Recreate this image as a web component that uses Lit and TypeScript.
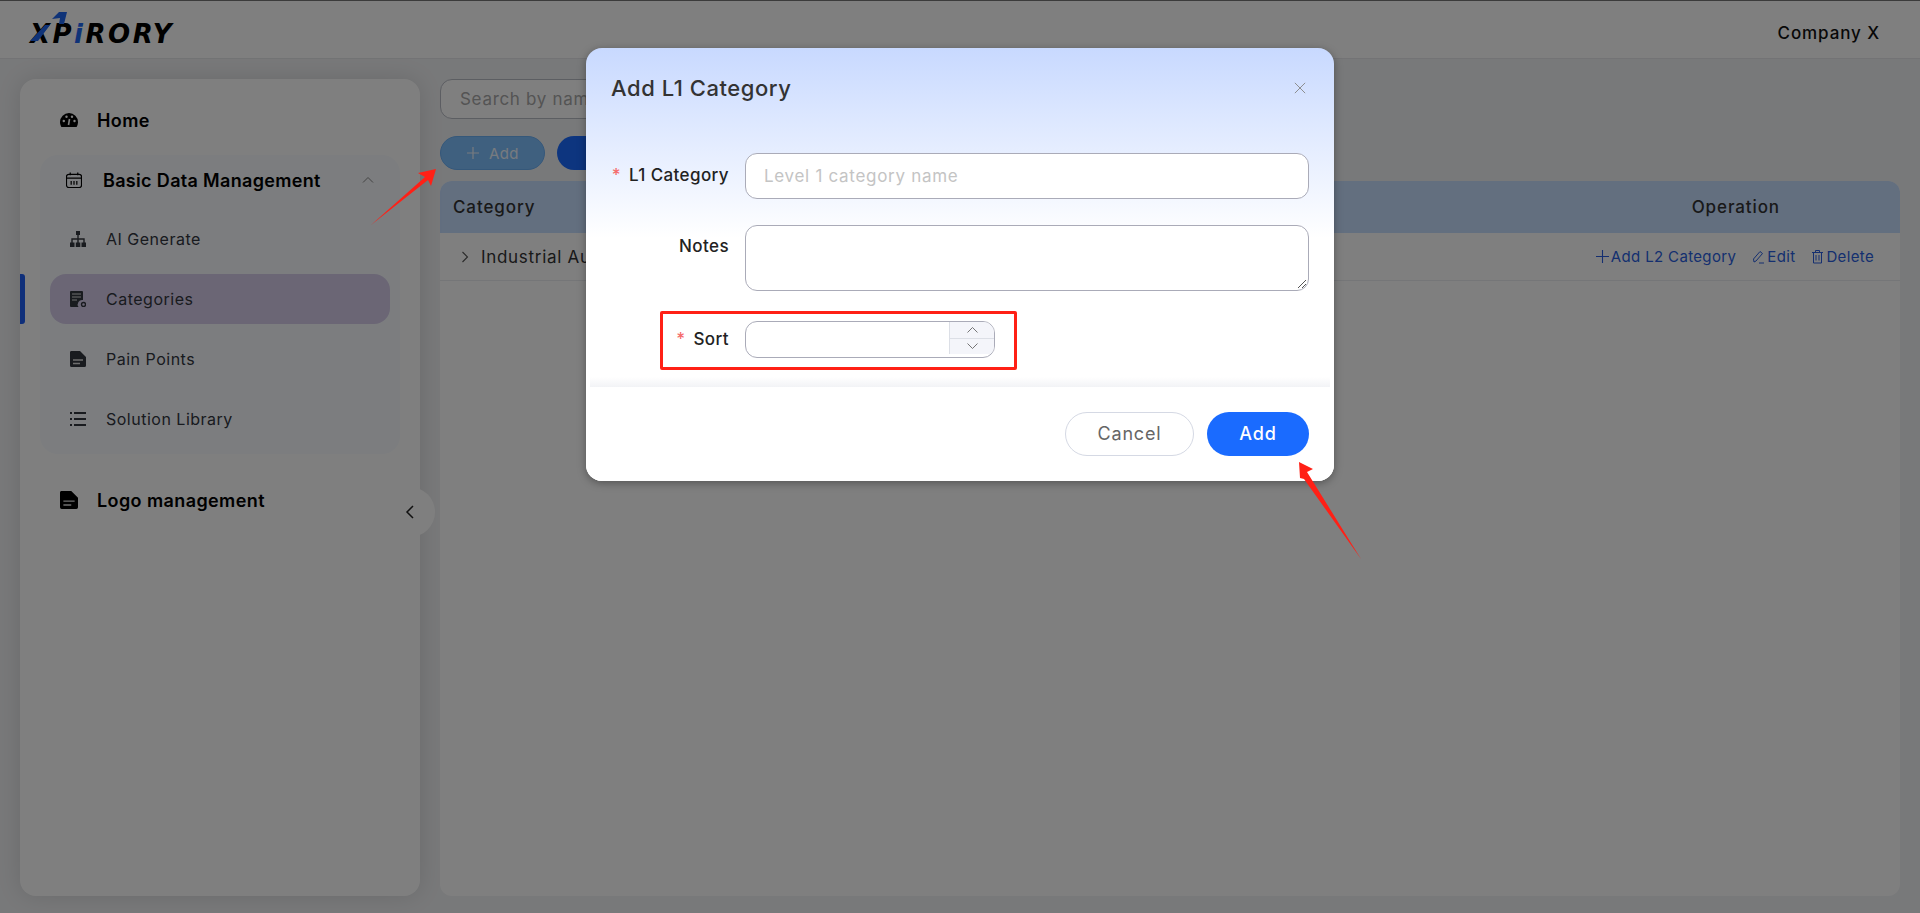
import { html, css, LitElement, svg } from 'lit';
import { customElement } from 'lit/decorators.js';

const icons = {
    gauge: svg`<path d="M10 3a9 9 0 0 0-9 9c0 1.800.5 3.300 1.400 5h15.200A8.600 8.600 0 0 0 19 12a9 9 0 0 0-9-9z" fill="currentColor"/><circle cx="4.800" cy="11" r="1.200" fill="#fff"/><circle cx="7.500" cy="6.800" r="1.200" fill="#fff"/><circle cx="13" cy="6.800" r="1.200" fill="#fff"/><circle cx="15.500" cy="11" r="1.200" fill="#fff"/><path d="M9.500 15l1-6" stroke="#fff" stroke-width="1.600"/>`,
    calendar: svg`<rect x="2" y="4" width="16" height="14" rx="2.500" fill="none" stroke="currentColor" stroke-width="1.300"/><path d="M2 8h16M6 2v3M14 2v3M7 11v4M10 11v4M13 11v4" stroke="currentColor" stroke-width="1.300" fill="none"/>`,
    tree: svg`<path d="M8 2h4v4H8zM2 13.500h4.500V18H2zM7.800 13.500h4.500V18H7.800zM13.500 13.500H18V18h-4.500z" fill="currentColor"/><path d="M10 6v8M4 14v-4h12v4" stroke="currentColor" stroke-width="1.400" fill="none"/>`,
    report: svg`<path d="M3 2h11a1 1 0 0 1 1 1v8a4.500 4.500 0 0 0-4.500 7H3a1 1 0 0 1-1-1V3a1 1 0 0 1 1-1z" fill="currentColor"/><path d="M4 5h9M4 8h9M4 11h5" stroke="#ddd" stroke-width="1"/><circle cx="15.500" cy="15.500" r="2" fill="none" stroke="currentColor" stroke-width="1.400"/>`,
    doc: svg`<path d="M3 2h9l6 6v8.500a1.500 1.500 0 0 1-1.500 1.500h-13A1.500 1.500 0 0 1 2 16.500v-13A1.500 1.500 0 0 1 3 2z" fill="currentColor"/><path d="M5 11h10M5 14.500h7" stroke="#ddd" stroke-width="1.300"/>`,
    list: svg`<path d="M2 3h2v2H2zM2 9h2v2H2zM2 15h2v2H2z" fill="currentColor"/><path d="M6 4h12M6 10h12M6 16h12" stroke="currentColor" stroke-width="2"/>`,
};

@customElement('app-root')
export class AppRoot extends LitElement {

    static styles = css`
        :host {
            display: block;
            position: relative;
            width: 1920px;
            height: 913px;
            overflow: hidden;
            font-family: Inter, 'Noto Sans', sans-serif;
            background: #f1f2f4;
        }

        .page { display: flex; flex-direction: column; height: 913px; border-top: 1px solid #777; box-sizing: border-box; }

        .header {
            height: 58px;
            flex: none;
            display: flex;
            align-items: center;
            justify-content: space-between;
            background: #fff;
            border-bottom: 1px solid #e6e7ea;
            box-sizing: border-box;
            padding: 0 40px 0 30px;
        }
        .logo { position: relative; font-family: 'DejaVu Sans', sans-serif; font-weight: 700; font-style: italic; font-size: 26px; letter-spacing: 2.500px; color: #000; line-height: 26px; padding-top: 8px; }
        .logo b { color: #1f66f0; font-weight: 700; }
        .logo svg { position: absolute; left: 0; top: -6px; }
        .company { font-size: 17px; font-weight: 500; color: #111; letter-spacing: 0.9px; margin-top: 6px; }

        .body { flex: 1; display: flex; gap: 20px; padding: 20px 20px 17px; min-height: 0; }

        .side {
            position: relative;
            width: 400px;
            flex: none;
            box-sizing: border-box;
            padding: 16px 20px 0;
            background: #fff;
            border-radius: 16px;
            box-shadow: 0 0 24px rgba(0, 0, 0, 0.12);
        }
        .marker { position: absolute; left: 0; top: 195px; width: 5px; height: 50px; background: #1f5ff5; border-radius: 0 3px 3px 0; }
        .top-item { display: flex; align-items: center; height: 50px; padding-left: 20px; gap: 19px; font-size: 18px; font-weight: 600; color: #000; letter-spacing: 0.4px; }
        .top-item svg { width: 18px; height: 18px; }
        .top-item svg.g { height: 14px; }
        .group { background: #f8fbff; border-radius: 18px; margin: 10px 0 21px; padding-bottom: 10px; }
        .group-head { display: flex; align-items: center; height: 50px; padding-left: 26px; gap: 21px; font-size: 18px; font-weight: 600; color: #000; margin-bottom: 9px; letter-spacing: 0.33px; }
        .group-head svg.ic { width: 16px; height: 16px; }
        .group-head .chev { margin-left: auto; margin-right: 26px; width: 12px; height: 8px; color: #888; }
        .sub { display: flex; flex-direction: column; gap: 10px; padding: 0 10px; }
        .sub-item { display: flex; align-items: center; height: 50px; padding-left: 20px; gap: 20px; font-size: 16px; font-weight: 400; color: #33363e; border-radius: 16px; letter-spacing: 0.5px; }
        .sub-item svg { width: 16px; height: 16px; }
        .sub-item.active { background: #d6cdeb; }

        .collapse { position: absolute; right: -15px; top: 408px; width: 50px; height: 50px; border-radius: 50%; background: #fff; display: flex; align-items: center; justify-content: center; }
        .collapse svg { width: 10px; height: 14px; }

        .main { flex: 1; min-width: 0; display: flex; flex-direction: column; }
        .search { width: 360px; height: 40px; flex: none; box-sizing: border-box; border: 1px solid #b9bcc5; border-radius: 12px; display: flex; align-items: center; padding-left: 19px; font-size: 17px; color: #a8a8a8; background: #fff; letter-spacing: 0.7px; }
        .tools { display: flex; gap: 12px; margin-top: 17px; }
        .btn { height: 34px; border-radius: 17px; display: flex; align-items: center; justify-content: center; gap: 9px; font-size: 15px; box-sizing: border-box; letter-spacing: 0.4px; }
        .btn svg { width: 14px; height: 14px; }
        .btn.light { width: 105px; background: #7fc0ff; color: #eef6ff; border: 1px solid #6bb0f5; }
        .btn.dark { width: 140px; background: #1a6bff; color: #fff; }

        .table { flex: 1; margin-top: 11px; background: #fff; border-radius: 12px; overflow: hidden; }
        .thead { height: 52px; background: #c6deff; display: flex; align-items: center; justify-content: space-between; padding: 0 120px 0 13px; font-size: 17px; font-weight: 500; color: #333; letter-spacing: 0.9px; }
        .row { height: 47px; border-bottom: 1px solid #ebedf0; display: flex; align-items: center; justify-content: space-between; padding: 0 26px 0 21px; font-size: 17px; color: #333; letter-spacing: 0.7px; }
        .row-name { display: flex; align-items: center; gap: 12px; }
        .row-name svg { width: 8px; height: 12px; }
        .actions { display: flex; gap: 15px; font-size: 15px; color: #2a5fe0; letter-spacing: 0.35px; }
        .actions span { display: flex; align-items: center; gap: 1px; }
        .actions svg { width: 15px; height: 15px; }

        .mask { position: absolute; inset: 0; background: rgba(0, 0, 0, 0.5); }

        .modal {
            position: absolute;
            left: 586px;
            top: 48px;
            width: 748px;
            height: 433px;
            box-sizing: border-box;
            border-radius: 16px;
            background: linear-gradient(180deg, #c8d9ff 0, #ffffff 190px);
            box-shadow: 0 2px 8px rgba(0, 0, 0, 0.35);
            display: flex;
            flex-direction: column;
            overflow: hidden;
        }
        .m-head { height: 105px; flex: none; box-sizing: border-box; padding: 26px 26px 0 25px; display: flex; justify-content: space-between; align-items: flex-start; }
        .m-title { font-size: 22px; font-weight: 500; line-height: 28px; color: #333; letter-spacing: 0.55px; }
        .close { width: 12px; height: 12px; margin: 8px 2px 0 0; color: #888; }
        .form { flex: 1; display: flex; flex-direction: column; background: linear-gradient(180deg, transparent calc(100% - 10px), #f2f3f6 100%); margin: 0 4px; padding: 0 21px; }
        .field { display: grid; grid-template-columns: 118px 1fr; column-gap: 16px; }
        .field + .field { margin-top: 26px; }
        .field.sort { margin-top: 30px; }
        .label { text-align: right; font-size: 17px; font-weight: 500; color: #222; line-height: 44px; letter-spacing: 0.4px; }
        .label i { color: #f56c6c; font-style: normal; margin-right: 8px; }
        .label.notes { line-height: 42px; }
        .label.s { line-height: 36px; }
        .input { height: 46px; box-sizing: border-box; border: 1px solid #aaabb8; border-radius: 12px; background: #fff; display: flex; align-items: center; padding-left: 18px; font-size: 17px; color: #c4c4c4; letter-spacing: 0.7px; }
        .area { position: relative; height: 66px; box-sizing: border-box; border: 1px solid #aaabb8; border-radius: 12px; background: #fff; }
        .area svg { position: absolute; right: 1px; bottom: 1px; width: 10px; height: 10px; }
        .num { width: 250px; height: 37px; box-sizing: border-box; border: 1px solid #aaabb8; border-radius: 12px; background: #fff; display: flex; justify-content: flex-end; overflow: hidden; }
        .spin { width: 44px; height: 32px; background: #f4f5fa; border-left: 1px solid #dcdfe6; display: flex; flex-direction: column; }
        .spin div { flex: 1; display: flex; align-items: center; justify-content: center; }
        .spin div + div { border-top: 1px solid #dcdfe6; }
        .spin svg { width: 11px; height: 6px; color: #666; }
        .m-foot { height: 94px; flex: none; box-sizing: border-box; padding: 25px 25px 0; display: flex; justify-content: flex-end; gap: 13px; background: #fff; }
        .m-btn { height: 44px; border-radius: 22px; display: flex; align-items: center; justify-content: center; font-size: 18px; box-sizing: border-box; letter-spacing: 0.8px; font-weight: 500; padding-bottom: 2px; }
        .m-btn.cancel { width: 129px; border: 1px solid #d5d9e4; color: #666; font-weight: 400; }
        .m-btn.add { width: 102px; background: #1a6bff; color: #fff; }

        .redbox { position: absolute; left: 660px; top: 311px; width: 357px; height: 59px; box-sizing: border-box; border: 3px solid #ff2016; border-radius: 2px; }
        .arrows { position: absolute; inset: 0; width: 1920px; height: 913px; pointer-events: none; }
    `;

    render() {
        return html`
        <div class="page">
            <div class="header">
                <div class="logo">
                    <svg width="60" height="42" viewBox="0 0 60 42"><path d="M0 34L15 18h5L8 34zM22 12l7-7h8l-3 12h-5l1-6z" fill="#1f66f0"/></svg>
                    X<span>P</span><b>i</b>RORY
                </div>
                <div class="company">Company X</div>
            </div>
            <div class="body">
                <div class="side">
                    <div class="marker"></div>
                    <div class="top-item"><svg class="g" viewBox="1 3 18 14">${icons.gauge}</svg>Home</div>
                    <div class="group">
                        <div class="group-head">
                            <svg class="ic" viewBox="1.500 1.500 17 17">${icons.calendar}</svg>Basic Data Management
                            <svg class="chev" viewBox="0 0 12 8"><path d="M1 6.500L6 1.500l5 5" fill="none" stroke="currentColor" stroke-width="1"/></svg>
                        </div>
                        <div class="sub">
                            <div class="sub-item"><svg viewBox="2 2 16 16">${icons.tree}</svg>AI Generate</div>
                            <div class="sub-item active"><svg viewBox="2 2 16 16">${icons.report}</svg>Categories</div>
                            <div class="sub-item"><svg viewBox="2 2 16 16">${icons.doc}</svg>Pain Points</div>
                            <div class="sub-item"><svg viewBox="2 2 16 16">${icons.list}</svg>Solution Library</div>
                        </div>
                    </div>
                    <div class="top-item"><svg viewBox="2 2 16 16">${icons.doc}</svg>Logo management</div>
                    <div class="collapse"><svg viewBox="0 0 10 14"><path d="M8 1L2 7l6 6" fill="none" stroke="#222" stroke-width="1.500"/></svg></div>
                </div>
                <div class="main">
                    <div class="search">Search by name</div>
                    <div class="tools">
                        <div class="btn light"><svg viewBox="0 0 14 14"><path d="M7 1v12M1 7h12" stroke="currentColor" stroke-width="1.200"/></svg>Add</div>
                        <div class="btn dark">Import</div>
                    </div>
                    <div class="table">
                        <div class="thead"><span>Category</span><span>Operation</span></div>
                        <div class="row">
                            <div class="row-name"><svg viewBox="0 0 8 12"><path d="M1.500 1l5 5-5 5" fill="none" stroke="#555" stroke-width="1.100"/></svg>Industrial Automation</div>
                            <div class="actions">
                                <span><svg viewBox="0 0 15 15"><path d="M7.500 1v13M1 7.500h13" stroke="currentColor" stroke-width="1.100"/></svg>Add L2 Category</span>
                                <span><svg viewBox="0 0 15 15"><path d="M3 13l-.5-3L9 2.500l2.500 2L5 12zM8 14h5" fill="none" stroke="currentColor" stroke-width="1"/></svg>Edit</span>
                                <span><svg viewBox="0 0 15 15"><path d="M2 3.500h11M5.500 3.500V1.500h4v2M3.500 3.500V14h8V3.500M6 6v5.500M9 6v5.500" fill="none" stroke="currentColor" stroke-width="1"/></svg>Delete</span>
                            </div>
                        </div>
                    </div>
                </div>
            </div>
        </div>
        <div class="mask"></div>
        <div class="modal">
            <div class="m-head">
                <div class="m-title">Add L1 Category</div>
                <svg class="close" viewBox="0 0 14 14"><path d="M1 1l12 12M13 1L1 13" stroke="currentColor" stroke-width="1.100"/></svg>
            </div>
            <div class="form">
                <div class="field">
                    <div class="label"><i>*</i>L1 Category</div>
                    <div class="input">Level 1 category name</div>
                </div>
                <div class="field">
                    <div class="label notes">Notes</div>
                    <div class="area"><svg viewBox="0 0 10 10"><path d="M1 9l8-8M5 9l4-4" stroke="#555" stroke-width="1"/></svg></div>
                </div>
                <div class="field sort">
                    <div class="label s"><i>*</i>Sort</div>
                    <div class="num">
                        <div class="spin">
                            <div><svg viewBox="0 0 11 6"><path d="M.5 5.500l5-5 5 5" fill="none" stroke="currentColor" stroke-width=".9"/></svg></div>
                            <div><svg viewBox="0 0 11 6"><path d="M.5.500l5 5 5-5" fill="none" stroke="currentColor" stroke-width=".9"/></svg></div>
                        </div>
                    </div>
                </div>
            </div>
            <div class="m-foot">
                <div class="m-btn cancel">Cancel</div>
                <div class="m-btn add">Add</div>
            </div>
        </div>
        <div class="redbox"></div>
        <svg class="arrows" viewBox="0 0 1920 913">
            <path d="M371 225L425 177l-7-4 18-4-5 17-3-6z" fill="#ff2016"/>
            <path d="M1361 559L1304 479l-4 -1-1-16 14 7-6 3z" fill="#ff2016"/>
        </svg>
        `;
    }
}
